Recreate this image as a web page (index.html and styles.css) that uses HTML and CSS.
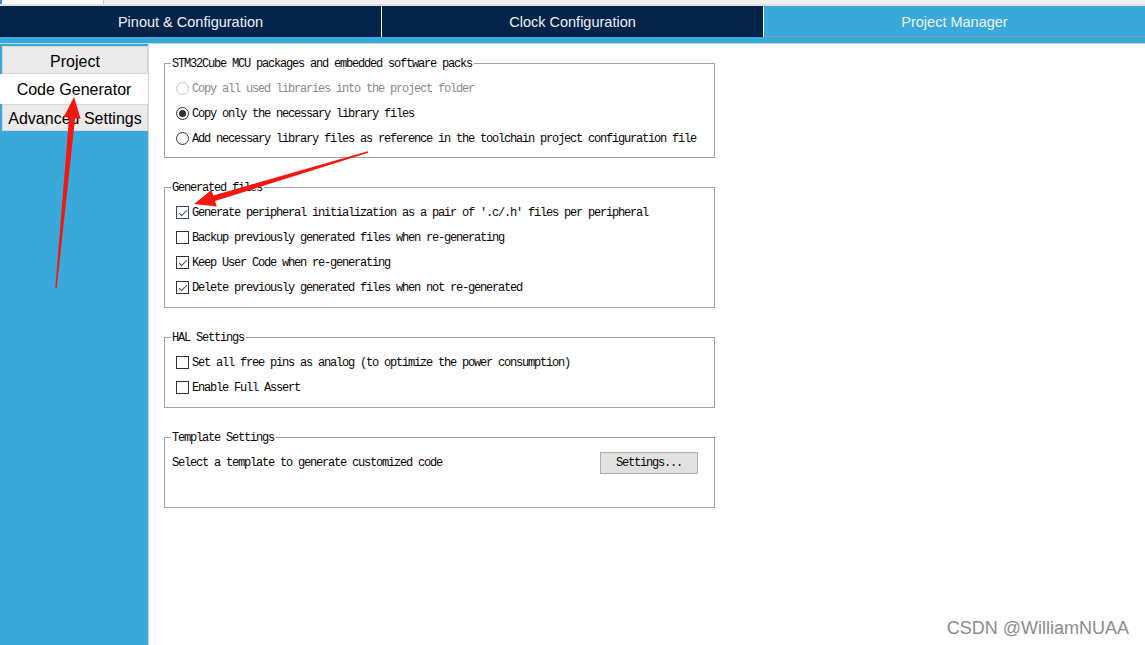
FILE: index.html
```html
<!DOCTYPE html>
<html>
<head>
<meta charset="utf-8">
<title>Project Manager - Code Generator</title>
<link rel="stylesheet" href="styles.css">
</head>
<body>
<div class="app">
  <div class="topstrip"><div class="topstrip-box"></div></div>
  <nav class="tabs">
    <div class="tab">Pinout &amp; Configuration</div>
    <div class="tab sep">Clock Configuration</div>
    <div class="tab sep active">Project Manager</div>
  </nav>
  <div class="band"></div>
  <div class="main">
    <aside class="sidebar">
      <div class="side-btn b1">Project</div>
      <div class="side-btn b2 selected">Code Generator</div>
      <div class="side-btn b3">Advanced Settings</div>
    </aside>
    <section class="content">
      <div class="group g1">
        <div class="group-title">STM32Cube MCU packages and embedded software packs</div>
        <div class="row disabled"><span class="radio"></span><span>Copy all used libraries into the project folder</span></div>
        <div class="row"><span class="radio on"></span><span>Copy only the necessary library files</span></div>
        <div class="row"><span class="radio"></span><span>Add necessary library files as reference in the toolchain project configuration file</span></div>
      </div>
      <div class="group g2">
        <div class="group-title">Generated files</div>
        <div class="row"><span class="check on focus"></span><span>Generate peripheral initialization as a pair of '.c/.h' files per peripheral</span></div>
        <div class="row"><span class="check"></span><span>Backup previously generated files when re-generating</span></div>
        <div class="row"><span class="check on"></span><span>Keep User Code when re-generating</span></div>
        <div class="row"><span class="check on"></span><span>Delete previously generated files when not re-generated</span></div>
      </div>
      <div class="group g3">
        <div class="group-title">HAL Settings</div>
        <div class="row"><span class="check"></span><span>Set all free pins as analog (to optimize the power consumption)</span></div>
        <div class="row"><span class="check"></span><span>Enable Full Assert</span></div>
      </div>
      <div class="group g4">
        <div class="group-title">Template Settings</div>
        <div class="row template"><span>Select a template to generate customized code</span><button class="btn">Settings...</button></div>
      </div>
    </section>
  </div>
  <svg class="annot" width="1145" height="645" viewBox="0 0 1145 645">
    <polygon fill="#f2170f" points="56.7,288.1 75.1,118.2 80.6,118.7 74,97 63.7,117.1 69.1,117.6 55.3,287.9"/>
    <polygon fill="#f2170f" points="367.8,151.3 213.3,195.4 211.4,190.1 194,204 216.9,206.4 215,201.1 368.2,152.7"/>
  </svg>
  <div class="watermark">CSDN @WilliamNUAA</div>
</div>
</body>
</html>
```

FILE: styles.css
```css
html, body {
  margin: 0;
  padding: 0;
  background: #ffffff;
}

.app {
  position: relative;
  width: 1145px;
  height: 645px;
  overflow: hidden;
  display: flex;
  flex-direction: column;
  font-family: "Liberation Sans", Arial, sans-serif;
}

.topstrip {
  height: 6px;
  box-sizing: border-box;
  background: #f0f0f0;
  border-bottom: 2px solid #e3e3e3;
  display: flex;
}

.topstrip-box {
  width: 101px;
  height: 4px;
  background: #ffffff;
  border-left: 2px solid #3a8ad6;
  border-right: 1px solid #c8c8c8;
}

.tabs {
  height: 31px;
  display: flex;
  background: #03234b;
}

.tab {
  width: 381px;
  display: flex;
  align-items: center;
  justify-content: center;
  color: #eef2f7;
  font-size: 14.5px;
  padding-top: 1px;
  box-sizing: border-box;
}

.tab.sep {
  border-left: 1px solid #ffffff;
  width: 382px;
}

.tab.active {
  flex: 1;
  background: #39a9db;
  border-bottom: 1px solid #8a9aa6;
}

.band {
  height: 7px;
  background: #39a9db;
  box-sizing: border-box;
  border-bottom: 1px solid #bcd9ea;
}

.main {
  flex: 1;
  display: flex;
}

.sidebar {
  width: 148px;
  background: #39a9db;
  padding: 2px 0 0 2px;
  box-sizing: border-box;
  display: flex;
  flex-direction: column;
}

.side-btn {
  display: flex;
  align-items: center;
  justify-content: center;
  box-sizing: border-box;
  background: #ebebeb;
  border: 1px solid #d7d7d7;
  font-size: 16px;
  color: #000;
}

.side-btn.b1 { height: 28px; padding-top: 3px; }
.side-btn.b2 { height: 30px; padding-top: 1px; }
.side-btn.b3 { height: 27px; padding-top: 3px; }

.side-btn.selected {
  background: #ffffff;
  border-color: #ffffff;
  margin-left: -2px;
}

.content {
  flex: 1;
  background: #ffffff;
  border-left: 1px solid #d4d4d4;
  padding: 19px 0 0 15px;
  font-family: "Liberation Mono", "Courier New", monospace;
  font-size: 12px;
  letter-spacing: -1.2px;
  color: #0a0404;
}

.group {
  width: 551px;
  box-sizing: border-box;
  border: 1px solid #a0a0a0;
  padding: 0 0 6px 7px;
  margin-bottom: 29px;
}

.group.g2, .group.g3 { padding-bottom: 7px; }
.group.g4 { padding-bottom: 32px; }

.group-title {
  width: fit-content;
  margin: -7px 0 5px -1px;
  padding: 0 2px 0 1px;
  background: #ffffff;
  line-height: 14px;
  height: 14px;
}

.row {
  height: 25px;
  display: flex;
  align-items: center;
  white-space: nowrap;
}

.row.disabled {
  color: #8a8a8a;
}

.row.template {
  justify-content: space-between;
  padding-right: 16px;
}

.radio, .check {
  flex: none;
  width: 13px;
  height: 13px;
  box-sizing: border-box;
  border: 1px solid #333333;
  background: #ffffff;
  margin: 0 3px 0 4px;
  position: relative;
}

.radio {
  border-radius: 50%;
}

.row.disabled .radio {
  border-color: #c4c4c4;
}

.radio.on::after {
  content: "";
  position: absolute;
  left: 2px;
  top: 2px;
  width: 7px;
  height: 7px;
  border-radius: 50%;
  background: #333333;
}

.check.focus {
  border-color: #2b4c72;
}

.check.on::after {
  content: "";
  position: absolute;
  left: 3.5px;
  top: 0.5px;
  width: 3px;
  height: 7px;
  border: solid #404040;
  border-width: 0 1.3px 1.3px 0;
  transform: rotate(45deg);
}

.btn {
  width: 98px;
  height: 22px;
  box-sizing: border-box;
  background: #e1e1e1;
  border: 1px solid #adadad;
  font-family: "Liberation Mono", "Courier New", monospace;
  font-size: 12px;
  letter-spacing: -1.2px;
  color: #0a0404;
  padding: 0;
}

.annot {
  position: absolute;
  left: 0;
  top: 0;
  pointer-events: none;
}

.watermark {
  position: absolute;
  right: 16px;
  top: 618px;
  font-family: "Liberation Sans", Arial, sans-serif;
  font-size: 18px;
  line-height: 21px;
  color: #8c8c8c;
}
```
